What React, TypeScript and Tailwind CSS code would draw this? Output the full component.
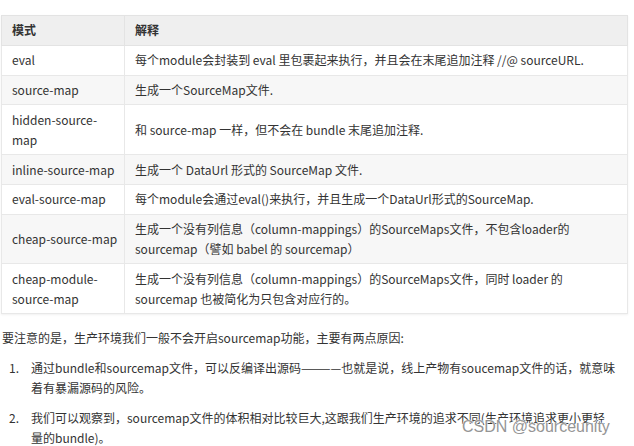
import React from "react";

const rows: { mode: React.ReactNode; desc: React.ReactNode }[] = [
  { mode: "eval", desc: "每个module会封装到 eval 里包裹起来执行，并且会在末尾追加注释 //@ sourceURL." },
  { mode: "source-map", desc: "生成一个SourceMap文件." },
  {
    mode: (
      <>
        hidden-source-
        <br />
        map
      </>
    ),
    desc: "和 source-map 一样，但不会在 bundle 末尾追加注释.",
  },
  { mode: "inline-source-map", desc: "生成一个 DataUrl 形式的 SourceMap 文件." },
  { mode: "eval-source-map", desc: "每个module会通过eval()来执行，并且生成一个DataUrl形式的SourceMap." },
  {
    mode: "cheap-source-map",
    desc: (
      <>
        生成一个没有列信息（column-mappings）的SourceMaps文件，不包含loader的
        <br />
        sourcemap（譬如 babel 的 sourcemap）
      </>
    ),
  },
  {
    mode: (
      <>
        cheap-module-
        <br />
        source-map
      </>
    ),
    desc: (
      <>
        生成一个没有列信息（column-mappings）的SourceMaps文件，同时 loader 的
        <br />
        sourcemap 也被简化为只包含对应行的。
      </>
    ),
  },
];

export default function App() {
  return (
    <div
      className="relative w-[634px] h-[446px] overflow-hidden bg-white text-[#333]"
      style={{ fontFamily: '"Noto Sans CJK SC", "Noto Sans", sans-serif' }}
    >
      <div className="pt-[15px] pl-[1px]">
        <table className="w-[627px] table-fixed border-collapse border border-[#e6e6e6] text-[12px] leading-[20px] shadow-[0_1px_2px_rgba(0,0,0,0.06)]">
          <colgroup>
            <col className="w-[123px]" />
            <col />
          </colgroup>
          <thead>
            <tr className="bg-[#efefef]">
              <th className="border border-[#e3e3e3] px-[10px] py-[4.4px] text-left font-bold">模式</th>
              <th className="border border-[#e3e3e3] px-[10px] py-[4.4px] text-left font-bold">解释</th>
            </tr>
          </thead>
          <tbody>
            {rows.map((r, i) => (
              <tr key={i} className={i % 2 === 1 ? "bg-[#f7f7f7]" : "bg-white"}>
                <td className="whitespace-nowrap border border-[#e8e8e8] px-[10px] py-[4.4px] align-middle">{r.mode}</td>
                <td className="whitespace-nowrap border border-[#e8e8e8] px-[10px] py-[4.4px] align-middle">{r.desc}</td>
              </tr>
            ))}
          </tbody>
        </table>
      </div>

      <p className="mt-[14px] pl-[2px] text-[12px] leading-[20px] text-[#333]">
        要注意的是，生产环境我们一般不会开启sourcemap功能，主要有两点原因:
      </p>

      <ol className="mt-[10px] flex flex-col gap-[10px] text-[12px] leading-[20px] text-[#333]">
        <li className="flex">
          <span className="w-[31px] shrink-0 pl-[9px]">1.</span>
          <span className="whitespace-nowrap">
            通过bundle和sourcemap文件，可以反编译出源码————也就是说，线上产物有soucemap文件的话，就意味
            <br />
            着有暴漏源码的风险。
          </span>
        </li>
        <li className="flex">
          <span className="w-[31px] shrink-0 pl-[9px]">2.</span>
          <span className="whitespace-nowrap">
            我们可以观察到，sourcemap文件的体积相对比较巨大,这跟我们生产环境的追求不同(生产环境追求更小更轻
            <br />
            量的bundle)。
          </span>
        </li>
      </ol>

      <div
        className="absolute left-[462px] top-[417px] z-10 text-[16px] leading-[20px] text-[#959595] whitespace-nowrap"
        style={{
          fontFamily: '"Liberation Sans", Arial, sans-serif',
          textShadow: "0 0 1px #fff, 0 0 1px #fff, 0 0 1px #fff",
        }}
      >
        CSDN @sourceunity
      </div>
    </div>
  );
}
